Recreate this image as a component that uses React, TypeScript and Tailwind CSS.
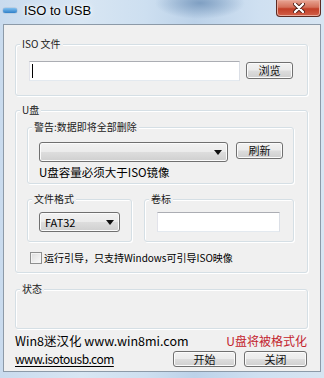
import type { ReactNode } from "react";

const btnBg =
  "border border-[#707070] rounded-[3px] bg-[linear-gradient(#f2f2f2_0%,#ebebeb_48%,#dddddd_52%,#cfcfcf_100%)] shadow-[inset_0_0_0_1px_#fbfbfb]";

function Group({
  label,
  className,
  children,
}: {
  label: string;
  className: string;
  children?: ReactNode;
}) {
  return (
    <div
      className={`flex flex-col rounded-[3px] border border-[#d5dfe5] shadow-[1px_1px_0_#ffffff,inset_1px_1px_0_#ffffff] ${className}`}
    >
      <span className="-mt-[8px] ml-[4px] w-fit bg-[#f0f0f0] px-[2px] text-[10px] leading-[14px] text-[#1b1b1b]">
        {label}
      </span>
      {children}
    </div>
  );
}

function Button({ label, className }: { label: string; className: string }) {
  return (
    <div
      className={`flex items-center justify-center text-[11px] leading-none text-[#111] ${btnBg} ${className}`}
    >
      {label}
    </div>
  );
}

function Arrow() {
  return (
    <svg width="8" height="5" viewBox="0 0 8 5" className="shrink-0">
      <path d="M0 0H8L4 5Z" fill="#111" />
    </svg>
  );
}

function TextBox({ className, caret }: { className: string; caret?: boolean }) {
  return (
    <div
      className={`flex items-center border border-[#abadb3] border-b-[#e3e9ef] border-l-[#e2e3ea] border-r-[#dbdfe6] bg-white pl-[2px] ${className}`}
    >
      {caret && <div className="h-[14px] w-[1px] bg-black" />}
    </div>
  );
}

export default function App() {
  return (
    <div className="flex h-[378px] w-[324px] flex-col overflow-hidden bg-[radial-gradient(ellipse_45px_16px_at_200px_3px,#7f9fc2,transparent),linear-gradient(90deg,#c9dbee_0%,#d8e6f3_25%,#cddff0_45%,#bcd2e9_60%,#cfe0f1_80%,#d7e5f2_100%)] font-['Noto_Sans_CJK_SC','Liberation_Sans',sans-serif]">
      {/* title bar */}
      <div className="flex h-[24px] items-start">
        <div className="flex h-[21px] items-center pl-[3px]">
          <div className="h-[5px] w-[14px] rounded-[3px] bg-[linear-gradient(#7fc0f0,#2f7fc8)] shadow-[0_0_1px_#1d4f80]" />
          <span className="ml-[7px] font-['Liberation_Sans',sans-serif] text-[13px] leading-none text-black [text-shadow:0_0_6px_#ffffff,0_0_3px_#ffffff]">
            ISO to USB
          </span>
        </div>
        <div className="mr-[3px] ml-auto flex h-[17px] w-[45px] items-center justify-center rounded-b-[4px] border border-t-0 border-[#5c2a22] bg-[linear-gradient(#e8a593_0%,#d4705a_45%,#c23f27_55%,#d1604a_100%)] shadow-[inset_0_0_0_1px_#e9a99a]">
          <svg width="12" height="10" viewBox="0 0 12 10">
            <path d="M2 1L10 9M10 1L2 9" stroke="#4a1a12" strokeWidth="4" strokeLinecap="round" />
            <path d="M2 1L10 9M10 1L2 9" stroke="#ffffff" strokeWidth="2.4" strokeLinecap="round" />
          </svg>
        </div>
      </div>

      {/* client area */}
      <div className="ml-[3px] flex h-[348px] w-[318px] flex-col border border-[#8c9aa8] bg-[#f0f0f0] pl-[11px]">
        <Group label="ISO 文件" className="mt-[19px] h-[52px] w-[293px]">
          <div className="mt-[10px] flex items-start pl-[13px]">
            <TextBox className="h-[20px] w-[211px]" caret />
            <Button label="浏览" className="mt-[1px] ml-[6px] h-[17px] w-[47px]" />
          </div>
        </Group>

        <Group label="U盘" className="mt-[14px] h-[163px] w-[293px]">
          <Group label="警告:数据即将全部删除" className="mt-[10px] ml-[11px] h-[57px] w-[267px]">
            <div className="mt-[8px] flex items-start pl-[11px]">
              <div className={`flex h-[20px] w-[189px] items-center justify-end pr-[5px] ${btnBg}`}>
                <Arrow />
              </div>
              <Button label="刷新" className="ml-[8px] h-[17px] w-[47px]" />
            </div>
            <span className="mt-[2px] pl-[11px] text-[11.5px] leading-[16px] text-black">
              U盘容量必须大于ISO镜像
            </span>
          </Group>

          <div className="mt-[15px] ml-[11px] flex gap-[12px]">
            <Group label="文件格式" className="h-[43px] w-[105px]">
              <div className={`mt-[6px] ml-[11px] flex h-[20px] w-[81px] items-center justify-between pr-[5px] pl-[5px] ${btnBg}`}>
                <span className="text-[11px] leading-none text-black">FAT32</span>
                <Arrow />
              </div>
            </Group>
            <Group label="卷标" className="h-[43px] w-[150px]">
              <TextBox className="mt-[6px] ml-[12px] h-[20px] w-[123px]" />
            </Group>
          </div>

          <div className="mt-[9px] ml-[14px] flex items-center gap-[2px]">
            <div className="h-[12px] w-[12px] border border-[#8e8f8f] bg-[linear-gradient(135deg,#dcdcdc,#fbfbfb)] shadow-[inset_0_0_0_1px_#f4f4f4]" />
            <span className="text-[10px] leading-[14px] text-black">
              运行引导，只支持Windows可引导ISO映像
            </span>
          </div>
        </Group>

        <Group label="状态" className="mt-[16px] h-[40px] w-[293px]" />

        <div className="mt-[4px] flex h-[16px] w-[292px] items-center justify-between">
          <span className="text-[12.5px] leading-[16px] text-black">Win8迷汉化 www.win8mi.com</span>
          <span className="text-[12px] leading-[16px] text-[#c3232d]">U盘将被格式化</span>
        </div>
        <div className="mt-[1px] flex h-[18px] w-[292px] items-center">
          <span className="text-[12px] leading-[16px] tracking-[-0.5px] text-black underline underline-offset-2">
            www.isotousb.com
          </span>
          <Button label="开始" className="ml-auto h-[16px] w-[63px]" />
          <Button label="关闭" className="ml-[8px] h-[16px] w-[63px]" />
        </div>
      </div>
    </div>
  );
}
